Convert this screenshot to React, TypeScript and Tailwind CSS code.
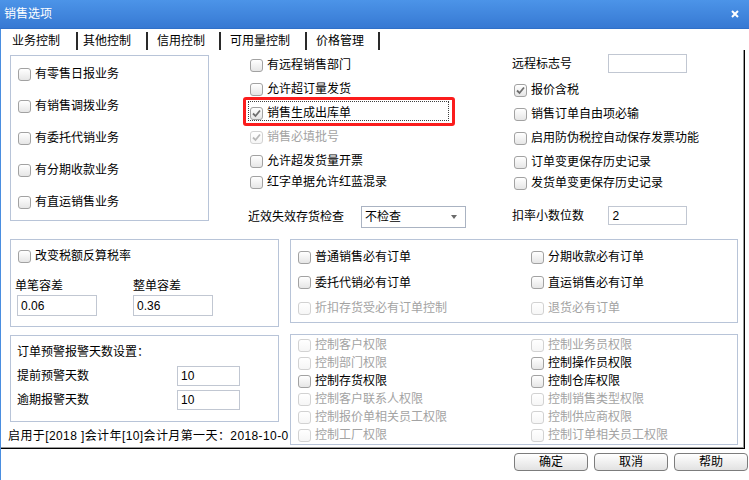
import React from 'react';

const font = "font-['Liberation_Sans','Noto_Sans_CJK_SC',sans-serif]";

function Box({ checked = false, disabled = false }: { checked?: boolean; disabled?: boolean }) {
  return (
    <span
      className={`relative shrink-0 w-[13px] h-[13px] rounded-[3px] border bg-gradient-to-b ${
        disabled ? 'border-[#d2d2d2] from-white to-[#f6f6f6]' : 'border-[#a2a2a2] from-white to-[#e6e6e6]'
      }`}
    >
      {checked && (
        <svg viewBox="0 0 11 11" className="absolute left-0 top-0 w-[11px] h-[11px]">
          <path
            d="M2 5.5 L4.5 8 L9 2.5"
            fill="none"
            stroke={disabled ? '#b8b8b8' : '#6e6e6e'}
            strokeWidth="1.8"
          />
        </svg>
      )}
    </span>
  );
}

interface CheckProps {
  label: string;
  checked?: boolean;
  disabled?: boolean;
  className?: string;
}

function Check({ label, checked, disabled, className = '' }: CheckProps) {
  return (
    <div className={`flex items-center gap-[4px] whitespace-nowrap ${className}`}>
      <Box checked={checked} disabled={disabled} />
      <span className={disabled ? 'text-[#a3a3a3]' : 'text-black'}>{label}</span>
    </div>
  );
}

function Field({ value, className = '' }: { value?: string; className?: string }) {
  return (
    <div className={`flex items-center pl-[3px] bg-white border border-[#c1c7d2] ${className}`}>{value}</div>
  );
}

const tabs = [
  { name: '业务控制', cls: 'w-[77px] pl-[11px]' },
  { name: '其他控制', cls: 'w-[70px] pl-[5px]' },
  { name: '信用控制', cls: 'w-[73px] pl-[9px]' },
  { name: '可用量控制', cls: 'w-[86px] pl-[9px]' },
  { name: '价格管理', cls: 'w-[73px] pl-[9px]' },
];

const orderChecks = [
  { label: '普通销售必有订单' },
  { label: '分期收款必有订单' },
  { label: '委托代销必有订单' },
  { label: '直运销售必有订单' },
  { label: '折扣存货受必有订单控制', disabled: true },
  { label: '退货必有订单', disabled: true },
];

const rightsChecks = [
  { label: '控制客户权限', disabled: true },
  { label: '控制业务员权限', disabled: true },
  { label: '控制部门权限', disabled: true },
  { label: '控制操作员权限' },
  { label: '控制存货权限' },
  { label: '控制仓库权限' },
  { label: '控制客户联系人权限', disabled: true },
  { label: '控制销售类型权限', disabled: true },
  { label: '控制报价单相关员工权限', disabled: true },
  { label: '控制供应商权限', disabled: true },
  { label: '控制工厂权限', disabled: true },
  { label: '控制订单相关员工权限', disabled: true },
];

export default function App() {
  return (
    <div className={`w-[749px] h-[480px] bg-white text-[12px] leading-none text-black overflow-hidden ${font}`}>
      {/* title bar */}
      <div className="h-[29px] flex items-center justify-between pl-[4px] pr-[10px] bg-gradient-to-b from-[#4c94e8] to-[#3779d3] border-b border-[#3070c8]">
        <span className="text-white">销售选项</span>
        <svg viewBox="0 0 8 8" className="w-[8px] h-[8px]">
          <path d="M1 1 L7 7 M7 1 L1 7" stroke="white" strokeWidth="2" />
        </svg>
      </div>

      <div className="h-[451px] border-l border-[#4a8ee0]">
        {/* tabs */}
        <div className="h-[21px] flex items-end">
          {tabs.map((t) => (
            <div
              key={t.name}
              className={`h-[18px] flex items-center border-r-2 border-[#2a2a2a] ${t.cls}`}
            >
              {t.name}
            </div>
          ))}
        </div>

        {/* tab page */}
        <div className="w-[744px] h-[399px] border-r border-b border-black shadow-[inset_-1px_-1px_0_#9a9a9a]">
          {/* row 1 */}
          <div className="h-[189px] flex items-start">
            <div className="ml-[9px] mt-[5px] w-[199px] h-[166px] border border-[#b8c4d8] pt-[2px] pl-[7px]">
              {['有零售日报业务', '有销售调拨业务', '有委托代销业务', '有分期收款业务', '有直运销售业务'].map((l) => (
                <Check key={l} label={l} className="h-[32px]" />
              ))}
            </div>

            <div className="ml-[41px] mt-[3px] w-[216px] flex flex-col">
              <Check label="有远程销售部门" className="h-[24px]" />
              <Check label="允许超订量发货" className="h-[24px]" />
              <div className="relative">
                <Check label="销售生成出库单" checked className="h-[24px]" />
                <div className="absolute left-[-2px] top-[0px] w-[201px] h-[20px] border border-dotted border-[#404040]" />
                <div className="absolute left-[-7px] top-[-4px] w-[212px] h-[29px] border-[3px] border-[#fb1c1c] rounded-[3px]" />
              </div>
              <Check label="销售必填批号" checked disabled className="h-[24px]" />
              <Check label="允许超发货量开票" className="h-[24px]" />
              <Check label="红字单据允许红蓝混录" className="h-[18px]" />
              <div className="mt-[14px] -ml-[2px] h-[23px] flex items-center">
                <span className="w-[113px]">近效失效存货检查</span>
                <div className="relative w-[105px] h-[22px] flex items-center pl-[3px] bg-white border border-[#aab3c2]">
                  不检查
                  <svg viewBox="0 0 6 4" className="absolute right-[8px] top-[8px] w-[6px] h-[4px]">
                    <path d="M0 0 H6 L3 4 Z" fill="#6a6a6a" />
                  </svg>
                </div>
              </div>
            </div>

            <div className="ml-[46px] mt-[4px] w-[175px] flex flex-col">
              <div className="h-[19px] flex items-center">
                <span className="w-[97px]">远程标志号</span>
                <Field className="w-[79px] h-[19px]" />
              </div>
              <div className="mt-[5px] pl-[2px]">
                <Check label="报价含税" checked className="h-[24px]" />
                <Check label="销售订单自由项必输" className="h-[24px]" />
                <Check label="启用防伪税控自动保存发票功能" className="h-[24px]" />
                <Check label="订单变更保存历史记录" className="h-[24px]" />
                <Check label="发货单变更保存历史记录" className="h-[18px]" />
              </div>
              <div className="mt-[14px] h-[19px] flex items-center">
                <span className="w-[97px]">扣率小数位数</span>
                <Field value="2" className="w-[79px] h-[19px]" />
              </div>
            </div>
          </div>

          {/* row 2 */}
          <div className="h-[94px] flex items-start">
            <div className="ml-[9px] w-[269px] h-[88px] border border-[#b8c4d8] pt-[6px]">
              <Check label="改变税额反算税率" className="h-[20px] pl-[7px]" />
              <div className="mt-[13px] flex">
                <div className="w-[122px] pl-[4px]">
                  <div className="h-[14px] flex items-center">单笔容差</div>
                  <Field value="0.06" className="mt-[2px] ml-[2px] w-[80px] h-[21px]" />
                </div>
                <div>
                  <div className="h-[14px] flex items-center">整单容差</div>
                  <Field value="0.36" className="mt-[2px] w-[80px] h-[21px]" />
                </div>
              </div>
            </div>

            <div className="ml-[11px] w-[448px] h-[84px] border border-[#b8c4d8] pt-[5px] pl-[7px] grid grid-cols-[233px_1fr]">
              {orderChecks.map((c) => (
                <Check key={c.label} label={c.label} disabled={c.disabled} className="h-[24px]" />
              ))}
            </div>
          </div>

          {/* row 3 */}
          <div className="flex items-start">
            <div className="w-[289px] flex flex-col">
              <div className="ml-[9px] mt-[2px] w-[269px] h-[87px] border border-[#b8c4d8] pt-[8px] pl-[6px]">
                <div className="h-[16px] flex items-center">订单预警报警天数设置：</div>
                <div className="mt-[6px] h-[20px] flex items-center">
                  <span className="w-[160px]">提前预警天数</span>
                  <Field value="10" className="w-[63px] h-[20px]" />
                </div>
                <div className="mt-[4px] h-[20px] flex items-center">
                  <span className="w-[160px]">逾期报警天数</span>
                  <Field value="10" className="w-[63px] h-[20px]" />
                </div>
              </div>
              <div className="mt-[6px] ml-[7px] h-[16px] flex items-center whitespace-nowrap tracking-[0.4px]">
                启用于[2018 ]会计年[10]会计月第一天：2018-10-0
              </div>
            </div>

            <div className="mt-[1px] w-[448px] h-[111px] border border-[#b8c4d8] pt-[1px] pl-[7px] grid grid-cols-[233px_1fr]">
              {rightsChecks.map((c) => (
                <Check key={c.label} label={c.label} disabled={c.disabled} className="h-[18px]" />
              ))}
            </div>
          </div>
        </div>

        {/* buttons */}
        <div className="mt-[4px] pr-[1px] flex justify-end gap-[6px]">
          {['确定', '取消', '帮助'].map((b) => (
            <button
              key={b}
              className="w-[74px] h-[18px] rounded-[4px] border border-[#7c7c7c] bg-gradient-to-b from-white to-[#e2e2e2] text-[12px] leading-none text-black"
            >
              {b}
            </button>
          ))}
        </div>
      </div>
    </div>
  );
}
